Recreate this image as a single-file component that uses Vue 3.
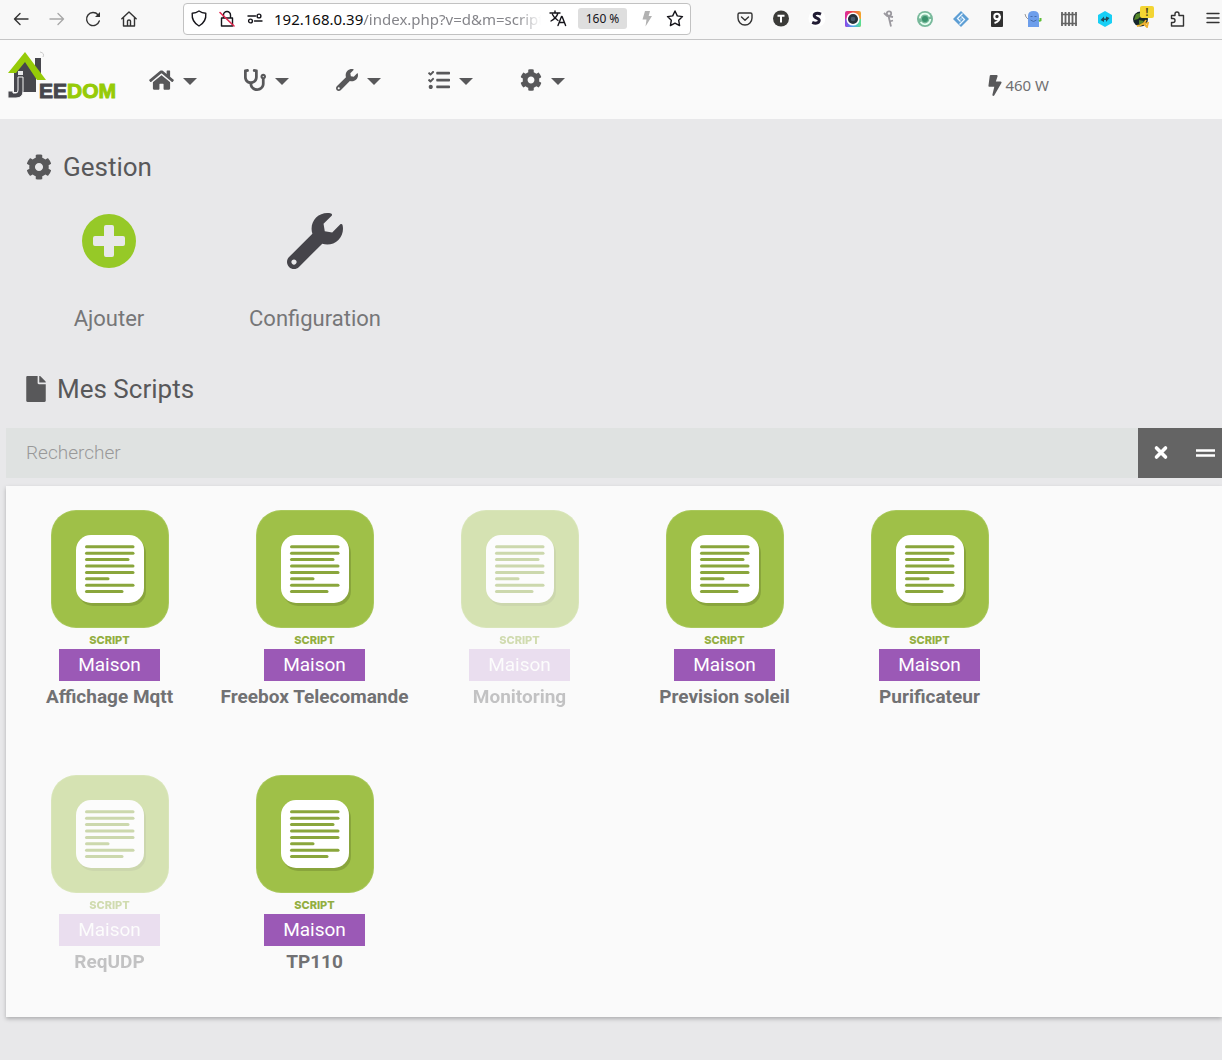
<script setup>
import { ref } from 'vue'

const address = ref('/index.php?v=d&m=script&p=script')
const search = ref('')

const icons = {
  home: { box: '0 0 576 512', d: 'M488 312.7V456c0 13.3-10.7 24-24 24H348c-6.6 0-12-5.4-12-12V356c0-6.6-5.4-12-12-12h-72c-6.6 0-12 5.4-12 12v112c0 6.6-5.4 12-12 12H112c-13.3 0-24-10.7-24-24V312.7c0-3.6 1.6-7 4.4-9.3l188-154.8c4.4-3.6 10.8-3.6 15.3 0l188 154.8c2.7 2.3 4.3 5.7 4.3 9.3zm83.6-60.9L488 182.9V44.4c0-6.6-5.4-12-12-12h-56c-6.6 0-12 5.4-12 12V117l-89.5-73.7c-17.7-14.6-43.3-14.6-61 0L4.4 251.8c-5.1 4.2-5.8 11.8-1.6 16.9l25.5 31c4.2 5.1 11.8 5.8 16.9 1.6l235.2-193.7c4.4-3.6 10.8-3.6 15.3 0l235.2 193.7c5.1 4.2 12.7 3.5 16.9-1.6l25.5-31c4.2-5.2 3.4-12.7-1.7-16.9z' },
  stethoscope: { box: '0 0 512 512', d: 'M447.1 112c-34.2.5-62.3 28.4-63 62.6-.5 24.3 12.5 45.6 32 56.8V344c0 57.3-50.2 104-112 104-60 0-109.2-44.1-111.9-99.2C265 333.8 320 269.2 320 192V36.6c0-11.4-8.1-21.3-19.3-23.5L237.8.5c-13-2.6-25.6 5.8-28.2 18.8L206.4 35c-2.6 13 5.8 25.6 18.8 28.2l30.7 6.1v121.4c0 52.9-42.2 96.7-95.1 97.2-53.4.5-96.9-42.7-96.9-96V69.4l30.7-6.1c13-2.6 21.4-15.2 18.8-28.2l-3.1-15.7C107.7 6.4 95.1-2 82.1.6L19.3 13C8.1 15.3 0 25.1 0 36.6V192c0 77.3 55.1 142 128.1 156.8C130.7 439.2 208.6 512 304 512c97 0 176-75.4 176-168V231.4c19.1-11.1 32-31.7 32-55.4 0-35.7-29.2-64.5-64.9-64zm.9 80c-8.8 0-16-7.2-16-16s7.2-16 16-16 16 7.2 16 16-7.2 16-16 16z' },
  wrench: { box: '0 0 512 512', d: 'M507.73 109.1c-2.24-9.03-13.54-12.09-20.12-5.51l-74.36 74.36-67.88-11.31-11.31-67.88 74.36-74.36c6.62-6.62 3.43-17.9-5.66-20.16-47.38-11.74-99.55.91-136.58 37.93-39.64 39.64-50.55 97.1-34.05 147.2L18.74 402.76c-24.99 24.99-24.99 65.51 0 90.5 24.99 24.99 65.51 24.99 90.5 0l213.21-213.21c50.12 16.71 107.47 5.68 147.37-34.22 37.07-37.07 49.7-89.32 37.91-136.73zM64 472c-13.25 0-24-10.75-24-24 0-13.26 10.75-24 24-24s24 10.74 24 24c0 13.25-10.75 24-24 24z' },
  tasks: { box: '0 0 512 512', d: 'M139 61l-12-12c-6-6-14-6-20 0L60 97 39 77c-5-5-13-5-19 0L5 92c-6 5-6 13 0 19l43 42c5 5 13 5 19 0l72-73c5-5 5-13 0-19zM139 221l-12-12c-6-6-14-6-20 0l-47 48-21-20c-5-5-13-5-19 0L5 252c-6 5-6 13 0 19l43 42c5 5 13 5 19 0l72-73c5-5 5-13 0-19zM64 368c-26 0-48 22-48 48s22 48 48 48 48-22 48-48-22-48-48-48zM208 64h288c9 0 16 7 16 16v32c0 9-7 16-16 16H208c-9 0-16-7-16-16V80c0-9 7-16 16-16zM208 224h288c9 0 16 7 16 16v32c0 9-7 16-16 16H208c-9 0-16-7-16-16v-32c0-9 7-16 16-16zM208 384h288c9 0 16 7 16 16v32c0 9-7 16-16 16H208c-9 0-16-7-16-16v-32c0-9 7-16 16-16z' },
  cog: { box: '0 0 512 512', d: 'M487.4 315.7l-42.6-24.6c4.3-23.2 4.3-47 0-70.2l42.6-24.6c4.9-2.8 7.1-8.6 5.5-14-11.1-35.6-30-67.8-54.7-94.6-3.8-4.1-10-5.1-14.8-2.3L380.8 110c-17.9-15.4-38.5-27.3-60.8-35.1V25.8c0-5.6-3.9-10.5-9.4-11.7-36.7-8.2-74.3-7.8-109.2 0-5.5 1.2-9.4 6.1-9.4 11.7V75c-22.2 7.9-42.8 19.8-60.8 35.1L88.7 85.5c-4.9-2.8-11-1.9-14.8 2.3-24.7 26.7-43.6 58.9-54.7 94.6-1.7 5.4.6 11.2 5.5 14L67.3 221c-4.3 23.2-4.3 47 0 70.2l-42.6 24.6c-4.9 2.8-7.1 8.6-5.5 14 11.1 35.6 30 67.8 54.7 94.6 3.8 4.1 10 5.1 14.8 2.3l42.6-24.6c17.9 15.4 38.5 27.3 60.8 35.1v49.2c0 5.6 3.9 10.5 9.4 11.7 36.7 8.2 74.3 7.8 109.2 0 5.5-1.2 9.4-6.1 9.4-11.7v-49.2c22.2-7.9 42.8-19.8 60.8-35.1l42.6 24.6c4.9 2.8 11 1.9 14.8-2.3 24.7-26.7 43.6-58.9 54.7-94.6 1.5-5.5-.7-11.3-5.6-14.1zM256 336c-44.1 0-80-35.9-80-80s35.9-80 80-80 80 35.9 80 80-35.9 80-80 80z' },
}

const menus = [
  { icon: 'home', label: 'Accueil' },
  { icon: 'stethoscope', label: 'Analyse' },
  { icon: 'wrench', label: 'Outils' },
  { icon: 'tasks', label: 'Plugins' },
  { icon: 'cog', label: 'Réglages' },
]

const scripts = [
  { name: 'Affichage Mqtt', enabled: true },
  { name: 'Freebox Telecomande', enabled: true },
  { name: 'Monitoring', enabled: false },
  { name: 'Prevision soleil', enabled: true },
  { name: 'Purificateur', enabled: true },
  { name: 'ReqUDP', enabled: false },
  { name: 'TP110', enabled: true },
]

// right end of each text line on the script sheet
const lines = [83, 83, 78, 83, 83, 58, 83, 72]
</script>

<template>
  <div class="window">
    <div class="browser">
      <div class="tools">
        <button aria-label="Page précédente"><svg viewBox="0 0 18 18" class="line"><path d="M16 9H2.500M8 3.500L2.500 9 8 14.500" /></svg></button>
        <button aria-label="Page suivante" disabled><svg viewBox="0 0 18 18" class="line"><path d="M2 9h13.500M10 3.500L15.500 9 10 14.500" /></svg></button>
        <button aria-label="Actualiser"><svg viewBox="0 0 18 18" class="line"><path d="M15.300 11A6.500 6.500 0 1 1 14 4.800" /><path d="M16 2v5h-5z" fill="#333" stroke="none" /></svg></button>
        <button aria-label="Page d’accueil"><svg viewBox="0 0 18 18" class="line"><path d="M1.800 8.700L9 2l7.200 6.700M3.500 7.500V16h11V7.500M7.500 15.500V11q0-1 1.500-1t1.500 1v4.500" /></svg></button>
      </div>

      <div class="urlbar">
        <svg viewBox="0 0 18 18" class="line dark"><path d="M9 1q3 2.300 6.800 2.300Q16.500 12 9 16 1.500 12 2.200 3.300 6 3.300 9 1z" /></svg>
        <svg viewBox="0 0 18 18" class="line dark"><path d="M3.500 8h11v8h-11zM5.500 7.500V5a3.500 3.500 0 0 1 7 0v2.500" /><path d="M2 2.500L16 16" stroke="#e22850" stroke-width="1.600" /></svg>
        <svg viewBox="0 0 18 18" class="line dark"><path d="M2 6h7.500M8.500 11H16" /><circle cx="13" cy="6" r="1.900" /><circle cx="4.500" cy="11" r="1.900" /></svg>
        <span class="host">192.168.0.39</span>
        <input v-model="address" class="path" aria-label="Adresse" />
        <svg viewBox="0 0 18 18" class="line dark translate"><path d="M1 3h10M6 1v2M9 3q-1.500 5-7 8M3.500 4.500Q5 8 9 10.500M9 15.500l3.500-9h.6l3.500 9M10.300 12.500h5" /></svg>
        <button class="zoom">160 %</button>
        <svg viewBox="0 0 18 18" class="flash"><path d="M7 1h5l-1.300 5H14L7.500 16.500l1-7H4.500z" fill="#b2b2b2" /></svg>
        <svg viewBox="0 0 18 18" class="line dark star"><path d="M9 1l2.300 4.900 5.200.7-3.800 3.700.9 5.300L9 13.100l-4.600 2.500.9-5.300L1.500 6.600l5.200-.7z" /></svg>
      </div>

      <div class="extensions">
        <svg viewBox="0 0 18 18" class="line"><path d="M3.500 3h11Q16 3 16 4.500V8A7 7 0 0 1 2 8V4.500Q2 3 3.500 3zM5.500 7L9 10.300 12.500 7" /></svg>
        <svg viewBox="0 0 18 18"><circle cx="9" cy="8.500" r="8" fill="#3b3b38" /><path d="M5.500 5.800h7M9 6v6.500" stroke="#fff" stroke-width="2" /></svg>
        <svg viewBox="0 0 18 18"><circle cx="9" cy="8.500" r="8.500" fill="#fff" /><path d="M13 4.200C9 2.500 6.200 3.500 6.200 5.600c0 3 5.300 2.200 5 5.100-.3 2.700-4 3-7 1.700" fill="none" stroke="#211c33" stroke-width="3" /></svg>
        <svg viewBox="0 0 18 18"><defs><linearGradient id="lens-top"><stop stop-color="#d82aa5" /><stop offset=".4" stop-color="#ef4350" /><stop offset="1" stop-color="#f3a72d" /></linearGradient><linearGradient id="lens-bottom"><stop stop-color="#8c48e6" /><stop offset=".5" stop-color="#4aa8ee" /><stop offset="1" stop-color="#5be08c" /></linearGradient></defs><rect x="1" y="1" width="16" height="16" rx="2" fill="url(#lens-top)" /><path d="M1 9h16v6q0 2-2 2H3q-2 0-2-2z" fill="url(#lens-bottom)" /><circle cx="9" cy="9" r="5.800" fill="#26313b" stroke="#fff" stroke-width="1.500" /><circle cx="9" cy="9" r="2.300" fill="#4a5a6c" /></svg>
        <svg viewBox="0 0 18 18" fill="none" stroke="#9b999f" stroke-width="1.800"><circle cx="9" cy="3.500" r="2.200" /><path d="M4 3l3 3 6 1M8.500 6L11 16.500M9.500 11.500l3.500-1" /></svg>
        <svg viewBox="0 0 18 18"><circle cx="9" cy="9" r="8" fill="#78b99b" /><circle cx="9" cy="9" r="5.300" fill="none" stroke="#e7fff1" stroke-width="1.800" stroke-dasharray="13 4" /><circle cx="9" cy="9" r="3" fill="#3a936d" /></svg>
        <svg viewBox="0 0 18 18"><path d="M9 1l8 8-8 8-8-8z" fill="#5d9ed4" /><path d="M10.500 3.500L5.500 8.500l3 3M7.500 14.500l5-5-3-3M8.500 9h1" stroke="#edf7ff" stroke-width="1.300" fill="none" /></svg>
        <svg viewBox="0 0 18 18"><rect x="3" y="1" width="12" height="16" rx="1" fill="#303030" /><circle cx="9" cy="6.500" r="2.700" fill="none" stroke="#fff" stroke-width="2" /><path d="M12 6q0 5.500-5.500 7" fill="none" stroke="#fff" stroke-width="2" /></svg>
        <svg viewBox="0 0 18 18"><path d="M4 17V6q0-5 5.500-5T15 6v11z" fill="#6d9eeb" /><path d="M6.500 6.500h2M10.500 6.500h2M6.500 10q3 3 6 0" stroke="#476cab" fill="none" /><path d="M1 4l1 3 2 2" stroke="#999" fill="none" /><path d="M15 11l2-1M16.500 8v3" stroke="#60bf36" stroke-width="2" /></svg>
        <svg viewBox="0 0 18 18" stroke="#656565" stroke-width="1.800"><path d="M2 2v14M5.500 2v14M9 2v14M12.500 2v14M16 2v14" /><path d="M1 4.500h16M1 13.500h16" stroke-width="1.300" /></svg>
        <svg viewBox="0 0 18 18"><path d="M9 1l7 4v8l-7 4-7-4V5z" fill="#18cff5" /><path d="M4.500 10L8 6.500v2h2V6.500l3.500 1.500L10 12v-2H8v2z" fill="#234c5b" /></svg>
        <span class="alerted"><svg viewBox="0 0 18 18"><circle cx="8.500" cy="9" r="7.500" fill="#15252a" /><path d="M4 4l4-1 1 3-3 3-4 1zM7 10l5 1-3 4-2-1z" fill="#558728" /><path d="M5 16q7-1 9-6M12 14l4-1-1 4z" stroke="#f0b330" stroke-width="1.800" fill="none" /></svg><b class="alert">!</b></span>
        <svg viewBox="0 0 18 18" class="line extension"><path d="M3.500 5.500H7V4a2 2 0 0 1 4 0v1.500h4.500V16h-12v-3.500H5a2 2 0 0 0 0-4H3.500z" /></svg>
        <svg viewBox="0 0 18 18" class="line"><path d="M3 3.500h12M3 8h12M3 12.500h12" /></svg>
      </div>
    </div>

    <header class="header">
      <a href="#" class="logo" aria-label="Jeedom">
        <svg viewBox="0 0 108 50">
          <path d="M6 17l11-9 11 10v23H6z" fill="#47474d" />
          <path d="M27 7h6v17l-6-5z" fill="#47474d" />
          <path d="M32 1q5 1 3 5" fill="none" stroke="#ccc" />
          <path d="M10 26h5v14q0 7-7 7H0v-7h5v2h3q2 0 2-3z" fill="#47474d" stroke="#f4f4f4" />
          <path d="M10 20h5v4h-5z" fill="#e8e8ea" />
          <path d="M0 22L17 1l21 28h-9L17 11l-9 11z" fill="#96cb08" />
          <text x="31" y="47" class="wordmark">EE<tspan class="green">DOM</tspan></text>
        </svg>
      </a>
      <nav class="menus">
        <button v-for="menu in menus" :key="menu.icon" :aria-label="menu.label" class="menu">
          <span class="glyph"><svg :viewBox="icons[menu.icon].box" :class="{ wide: menu.icon === 'home' }"><path :d="icons[menu.icon].d" /></svg></span>
          <svg viewBox="0 0 14 7" class="caret"><path d="M0 0h14L7 7z" /></svg>
        </button>
      </nav>
      <div class="power">
        <svg viewBox="0 0 320 512"><path d="M296 160H180.600l42.600-129.800C227.200 15 215.700 0 200 0H56C44 0 33.800 8.900 32.200 20.800l-32 240C-1.700 275.200 9.500 288 24 288h118.700L96.600 482.500c-3.600 15.200 8 29.500 23.300 29.500 8.400 0 16.400-4.400 20.800-12l176-304c9.300-15.900-2.200-36-20.700-36z" /></svg>
        <span>460 W</span>
      </div>
    </header>

    <main class="page">
      <h2 class="title"><svg viewBox="0 0 512 512" class="title-cog"><path :d="icons.cog.d" /></svg>Gestion</h2>
      <div class="actions">
        <button class="action">
          <svg viewBox="0 0 54 54" class="add"><circle cx="27" cy="27" r="27" fill="#96c927" /><path d="M24 11h6q2 0 2 2v9h9q2 0 2 2v6q0 2-2 2h-9v9q0 2-2 2h-6q-2 0-2-2v-9h-9q-2 0-2-2v-6q0-2 2-2h9v-9q0-2 2-2z" fill="#e8e8ea" /></svg>
          <span>Ajouter</span>
        </button>
        <button class="action">
          <svg viewBox="0 0 512 512"><path :d="icons.wrench.d" fill="#45444a" /></svg>
          <span>Configuration</span>
        </button>
      </div>

      <h2 class="title"><svg viewBox="0 0 384 512" class="title-file"><path d="M224 136V0H24C10.700 0 0 10.700 0 24v464c0 13.300 10.700 24 24 24h336c13.300 0 24-10.700 24-24V160H248c-13.200 0-24-10.800-24-24zm160-14.100v6.100H256V0h6.100c6.400 0 12.500 2.500 17 7l97.900 98c4.500 4.500 7 10.600 7 16.900z" /></svg>Mes Scripts</h2>

      <div class="search">
        <input v-model="search" type="text" placeholder="Rechercher" aria-label="Rechercher" />
        <button aria-label="Effacer" @click="search = ''"><svg viewBox="0 0 20 20"><path d="M5.500 5l9 9M14.500 5l-9 9" stroke="#fff" stroke-width="3.600" stroke-linecap="round" /></svg></button>
        <button aria-label="Affichage en liste"><svg viewBox="0 0 20 20"><path d="M1 7.500h19M1 12.500h19" stroke="#fff" stroke-width="2.600" /></svg></button>
      </div>

      <section class="cards">
        <a v-for="script in scripts" :key="script.name" href="#" class="card" :class="{ disabled: !script.enabled }">
          <svg viewBox="0 0 118 118" class="tile">
            <rect width="118" height="118" rx="25" fill="#a9c85c" />
            <rect x="1" y="1" width="116" height="116" rx="24" fill="#9fc048" />
            <rect x="27" y="28" width="68" height="68" rx="15" fill="#89a53c" />
            <rect x="25" y="25" width="68" height="68" rx="15" fill="#fff" />
            <path v-for="(end, i) in lines" :key="i" :d="`M35.500 ${36.800 + i * 6.400}H${end - 1}`" stroke="#8aa63c" stroke-width="3" stroke-linecap="round" />
          </svg>
          <span class="plugin">SCRIPT</span>
          <span class="room">Maison</span>
          <strong>{{ script.name }}</strong>
        </a>
      </section>
    </main>
  </div>
</template>

<style>
body {
  margin: 0;
  background: #e8e8ea;
}
</style>

<style scoped>
.window {
  min-height: 100vh;
  overflow: hidden;
  background: #e8e8ea;
  color: #58585a;
  font-family: Roboto, "Liberation Sans", sans-serif;
}
svg { display: block; flex: none; }
button {
  padding: 0;
  border: 0;
  background: none;
  color: inherit;
  font: inherit;
}
input { min-width: 0; border: 0; outline: 0; font: inherit; }
a { color: inherit; text-decoration: none; }

.browser {
  display: flex;
  align-items: center;
  box-sizing: border-box;
  height: 40px;
  padding: 0 0 2px 12px;
  border-bottom: 1px solid #c5c5c6;
  background: #f8f8f8;
  font-family: "Noto Sans", "Open Sans", sans-serif;
}
.browser svg { width: 18px; height: 18px; }
.tools, .extensions { display: flex; gap: 18px; }
.line { fill: none; stroke: #333; stroke-width: 1.4; stroke-linejoin: round; stroke-linecap: round; }
.dark { stroke: #15141a; }
.tools button:disabled { opacity: 0.4; }
.urlbar {
  display: flex;
  flex: 1;
  align-items: center;
  box-sizing: border-box;
  min-width: 0;
  height: 32px;
  margin: 0 45px;
  padding: 0 6px;
  border: 1px solid #c2c2c2;
  border-radius: 4px;
  background: #fff;
  font-size: 15px;
}
.urlbar .line + .line { margin-left: 10px; }
.host { margin-left: 10px; color: #0c0c0d; }
.path {
  flex: 1;
  padding: 0;
  background: none;
  color: #85858a;
  mask-image: linear-gradient(to left, transparent, #000 24px);
}
.translate { margin-left: 8px; }
.zoom {
  width: 49px;
  height: 21px;
  margin: 0 11px;
  border-radius: 3px;
  background: #dedede;
  color: #15141a;
  font-size: 12px;
}
.star { margin-left: 10px; }
.alerted { position: relative; }
.alert {
  position: absolute;
  top: -4px;
  right: -4px;
  width: 14px;
  border-radius: 2px;
  background: #f3d533;
  color: #4b4720;
  font-size: 10px;
  line-height: 12px;
  text-align: center;
}

.header {
  display: flex;
  align-items: center;
  height: 79px;
  padding: 0 173px 0 8px;
  background: #fafafa;
}
.logo { margin-top: -8px; }
.logo svg { width: 108px; height: 50px; overflow: visible; }
.wordmark {
  fill: #47474d;
  stroke: #47474d;
  font: 700 21px "Liberation Sans", Arial, sans-serif;
}
.green { fill: #96cb08; stroke: #96cb08; }
.menus { display: flex; margin-left: 34px; }
.menu {
  display: flex;
  align-items: center;
  gap: 9px;
  width: 92px;
  height: 79px;
}
.menu svg, .power svg { fill: #58585a; }
.glyph { display: flex; justify-content: flex-end; width: 24px; }
.glyph svg { width: 22px; height: 22px; }
.glyph .wide { width: 25px; }
.menu .caret { width: 14px; height: 7px; margin-top: 4px; }
.power {
  display: flex;
  align-items: center;
  gap: 3px;
  margin: 10px 0 0 auto;
  color: #707072;
  font: 15px/20px "Noto Sans", "Open Sans", sans-serif;
}
.power svg { width: 14px; height: 21px; margin-top: 2px; }

.page { padding: 31px 0 42px 6px; }
.title {
  display: flex;
  align-items: center;
  gap: 11px;
  height: 34px;
  margin: 0;
  padding-left: 20px;
  font-size: 26px;
  font-weight: 400;
}
.title svg { fill: #58585a; }
.title-cog { width: 26px; height: 26px; }
.title-file { width: 20px; height: 26px; }
.actions { display: flex; height: 188px; }
.action {
  display: flex;
  flex-direction: column;
  align-items: center;
  width: 206px;
  padding-top: 29px;
  color: #767678;
  font-size: 22px;
  line-height: 26px;
}
.action svg { width: 56px; height: 56px; margin-bottom: 37px; }
.action .add { width: 54px; height: 54px; margin: 1px 0 38px; }

.search { display: flex; height: 50px; margin: 22px 0 8px; }
.search input {
  flex: 1;
  padding: 0 20px 2px;
  background: #dfe2e1;
  color: #58585a;
  font-size: 19px;
  font-weight: 300;
}
.search input::placeholder { color: #999; opacity: 1; }
.search button {
  display: flex;
  align-items: center;
  width: 40px;
  padding-left: 13px;
  background: #646464;
}
.search button + button { width: 44px; padding-left: 17px; }
.search svg { width: 20px; height: 20px; }

.cards {
  display: grid;
  grid-template-columns: repeat(auto-fill, 205px);
  grid-auto-rows: 265px;
  padding: 1px 180px 0 1px;
  background: #fafafa;
  box-shadow: 0 2px 4px rgba(0, 0, 0, 0.25);
}
.card {
  display: flex;
  flex-direction: column;
  align-items: center;
  padding-top: 23px;
  color: #717173;
  font-size: 19px;
}
.card.disabled { opacity: 0.4; }
.disabled .room { background: #d3b5e0; }
.tile { width: 118px; height: 118px; }
.plugin {
  margin-top: 4px;
  color: #92ae40;
  font: 800 11px/16px Inter, sans-serif;
}
.room {
  width: 101px;
  margin-top: 1px;
  background: #9b59b6;
  color: #fff;
  line-height: 32px;
  text-align: center;
}
.card strong { margin-top: 3px; line-height: 26px; white-space: nowrap; }
</style>
